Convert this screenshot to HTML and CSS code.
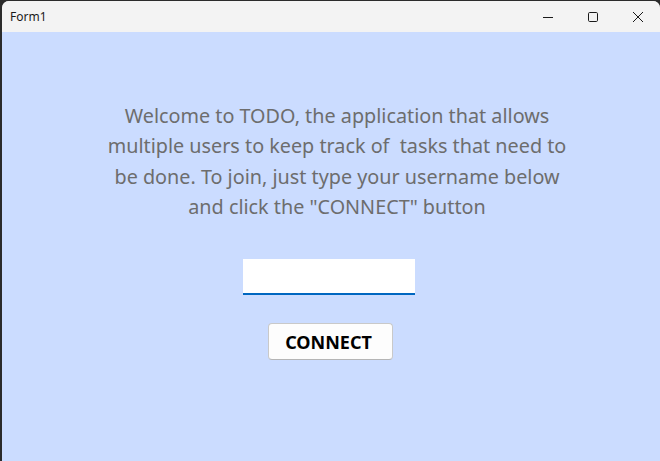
FILE: index.html
```html
<!DOCTYPE html>
<html>
<head>
<meta charset="utf-8">
<link rel="stylesheet" href="styles.css">
</head>
<body>
<div class="window">
  <div class="titlebar">
    <span class="title">Form1</span>
    <div class="controls">
      <span class="ctl"><svg width="10" height="10" viewBox="0 0 10 10"><path d="M0 5.5h10" stroke="#1a1a1a" stroke-width="1"/></svg></span>
      <span class="ctl"><svg width="10" height="10" viewBox="0 0 10 10"><rect x="0.5" y="0.5" width="9" height="9" rx="1.2" fill="none" stroke="#1a1a1a" stroke-width="1"/></svg></span>
      <span class="ctl"><svg width="10" height="10" viewBox="0 0 10 10"><path d="M0 0L10 10M10 0L0 10" stroke="#1a1a1a" stroke-width="1"/></svg></span>
    </div>
  </div>
  <div class="client">
    <p class="intro">Welcome to TODO, the application that allows<br>multiple users to keep track of&nbsp; tasks that need to<br>be done. To join, just type your username below<br>and click the "CONNECT" button</p>
    <input class="username" type="text">
    <button class="connect">CONNECT</button>
  </div>
</div>
</body>
</html>
```
FILE: styles.css
```css
html, body {
  margin: 0;
  padding: 0;
  width: 660px;
  height: 461px;
  overflow: hidden;
  background: #2b2b2b;
}
.window {
  margin-left: 2px;
  margin-top: 1px;
  height: 460px;
  display: flex;
  flex-direction: column;
  border-top-left-radius: 7px;
  border-top-right-radius: 7px;
  overflow: hidden;
  background: #f3f3f3;
}
.titlebar {
  height: 31px;
  flex: none;
  display: flex;
  align-items: center;
  justify-content: space-between;
  background: #f3f3f3;
  font-family: "Segoe UI", "Noto Sans", sans-serif;
}
.title {
  font-size: 12px;
  color: #1a1a1a;
  padding-left: 8px;
}
.controls {
  display: flex;
  height: 100%;
}
.ctl {
  width: 45px;
  display: flex;
  align-items: center;
  justify-content: center;
}
.client {
  flex: 1;
  background: #cbdcff;
  display: flex;
  flex-direction: column;
  align-items: center;
  font-family: "Segoe UI", "Noto Sans", sans-serif;
}
.intro {
  margin: 69px 0 0 12px;
  white-space: nowrap;
  text-align: center;
  font-size: 19.8px;
  line-height: 30.3px;
  color: #6d6d6d;
}
.username {
  margin-top: 37px;
  width: 172px;
  height: 36px;
  box-sizing: border-box;
  border: none;
  border-bottom: 2px solid #0067c0;
  background: #fff;
  outline: none;
  padding: 0 6px;
  font-size: 16px;
  margin-left: -4px;
}
.connect {
  margin-top: 28px;
  margin-left: -2px;
  width: 125px;
  height: 37px;
  box-sizing: border-box;
  background: #fdfdfd;
  border: 1px solid #c9c9c9;
  border-bottom-color: #b5b5b5;
  border-radius: 4px;
  font-family: "Segoe UI", "Noto Sans", sans-serif;
  font-weight: bold;
  font-size: 18px;
  color: #000;
  padding: 0 3px 0 0;
}
```
